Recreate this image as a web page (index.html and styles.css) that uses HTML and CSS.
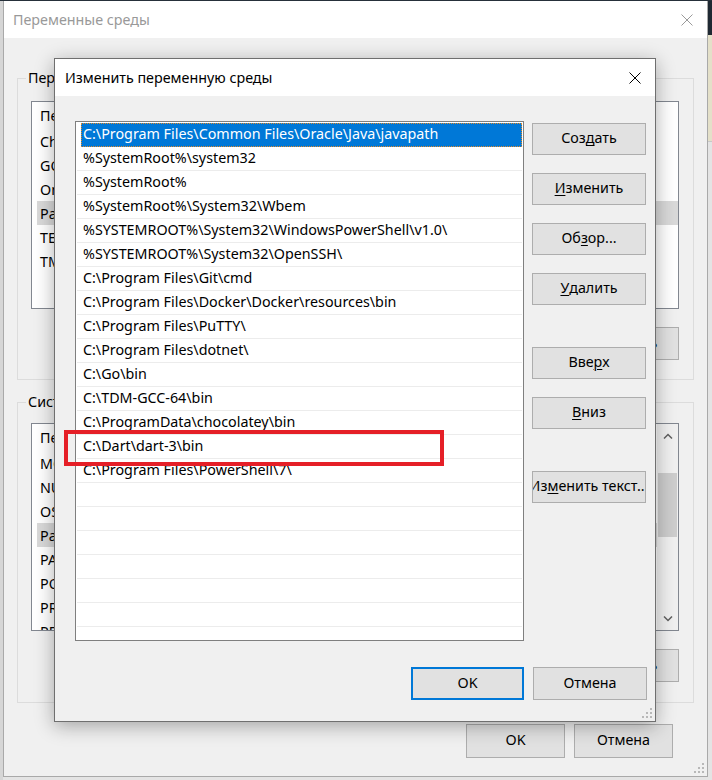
FILE: index.html
```html
<!DOCTYPE html>
<html>

<head>
    <title>Переменные среды</title>
    <meta charset="utf-8">
    <link rel="stylesheet" href="styles.css">
</head>

<body>

    <div class="desk">

        <div class="edge-left"></div>

        <!-- окно на заднем плане -->
        <div class="win main">
            <div class="titlebar">
                <span class="title">Переменные среды</span>
                <svg class="close" width="12" height="12" viewBox="0 0 12 12">
                    <path d="M0.5 0.5 L11.5 11.5 M11.5 0.5 L0.5 11.5" stroke="#9a9a9a" stroke-width="1" fill="none" />
                </svg>
            </div>
            <div class="win-body">
                <div class="group">
                    <span class="legend">Переменные среды пользователя</span>
                    <div class="lv">
                        <div class="lv-items">
                            <div class="lv-head">Переменная</div>
                            <div class="lv-row">ChocolateyLastPathUpdate</div>
                            <div class="lv-row">GOPATH</div>
                            <div class="lv-row">OneDrive</div>
                            <div class="lv-row sel">Path</div>
                            <div class="lv-row">TEMP</div>
                            <div class="lv-row">TMP</div>
                        </div>
                    </div>
                    <div class="btns">
                        <button>Создать...</button>
                        <button>Изменить...</button>
                        <button>Удалить</button>
                    </div>
                </div>

                <div class="group sys">
                    <span class="legend">Системные переменные</span>
                    <div class="lv">
                        <div class="lv-items">
                            <div class="lv-head">Переменная</div>
                            <div class="lv-row">MOZ_PLUGIN_PATH</div>
                            <div class="lv-row">NUMBER_OF_PROCESSORS</div>
                            <div class="lv-row">OS</div>
                            <div class="lv-row sel">Path</div>
                            <div class="lv-row">PATHEXT</div>
                            <div class="lv-row">POWERSHELL_DISTRIBUTION</div>
                            <div class="lv-row">PROCESSOR_ARCHITECTURE</div>
                            <div class="lv-row">PROCESSOR_IDENTIFIER</div>
                        </div>
                        <div class="sb">
                            <div class="sb-arrow">
                                <svg width="10" height="6" viewBox="0 0 10 6"><path d="M1 5.5 L5 1.5 L9 5.5" stroke="#606060" stroke-width="1.5" fill="none" /></svg>
                            </div>
                            <div class="sb-track"><div class="sb-thumb"></div></div>
                            <div class="sb-arrow">
                                <svg width="10" height="6" viewBox="0 0 10 6"><path d="M1 0.5 L5 4.5 L9 0.5" stroke="#606060" stroke-width="1.5" fill="none" /></svg>
                            </div>
                        </div>
                    </div>
                    <div class="btns">
                        <button>Создать...</button>
                        <button>Изменить...</button>
                        <button>Удалить</button>
                    </div>
                </div>

                <div class="btns bottom">
                    <button>OK</button>
                    <button>Отмена</button>
                </div>

                <svg class="grip" width="10" height="10" viewBox="0 0 10 10">
                    <rect x="8" y="0" width="2" height="2" /><rect x="4" y="4" width="2" height="2" /><rect x="8" y="4" width="2" height="2" />
                    <rect x="0" y="8" width="2" height="2" /><rect x="4" y="8" width="2" height="2" /><rect x="8" y="8" width="2" height="2" />
                </svg>
            </div>
        </div>

        <div class="edge-right">
            <div class="edge-dark"></div>
            <div class="edge-img"></div>
        </div>

        <!-- диалог поверх -->
        <div class="win dlg">
            <div class="titlebar">
                <span class="title">Изменить переменную среды</span>
                <svg class="close" width="12" height="12" viewBox="0 0 12 12">
                    <path d="M0.5 0.5 L11.5 11.5 M11.5 0.5 L0.5 11.5" stroke="#000" stroke-width="1" fill="none" />
                </svg>
            </div>
            <div class="dlg-body">
                <div class="dlg-main">
                    <div class="paths">
                        <div class="p-row sel">C:\Program Files\Common Files\Oracle\Java\javapath</div>
                        <div class="p-row">%SystemRoot%\system32</div>
                        <div class="p-row">%SystemRoot%</div>
                        <div class="p-row">%SystemRoot%\System32\Wbem</div>
                        <div class="p-row">%SYSTEMROOT%\System32\WindowsPowerShell\v1.0\</div>
                        <div class="p-row">%SYSTEMROOT%\System32\OpenSSH\</div>
                        <div class="p-row">C:\Program Files\Git\cmd</div>
                        <div class="p-row">C:\Program Files\Docker\Docker\resources\bin</div>
                        <div class="p-row">C:\Program Files\PuTTY\</div>
                        <div class="p-row">C:\Program Files\dotnet\</div>
                        <div class="p-row">C:\Go\bin</div>
                        <div class="p-row">C:\TDM-GCC-64\bin</div>
                        <div class="p-row">C:\ProgramData\chocolatey\bin</div>
                        <div class="p-row">C:\Dart\dart-3\bin</div>
                        <div class="p-row">C:\Program Files\PowerShell\7\</div>
                        <div class="p-row"></div>
                        <div class="p-row"></div>
                        <div class="p-row"></div>
                        <div class="p-row"></div>
                        <div class="p-row"></div>
                        <div class="p-row"></div>
                        <div class="p-row"></div>
                    </div>
                    <div class="side">
                        <button>Соз<u>д</u>ать</button>
                        <button><u>И</u>зменить</button>
                        <button>Об<u>з</u>ор...</button>
                        <button><u>У</u>далить</button>
                        <button class="gap">Вве<u>р</u>х</button>
                        <button><u>В</u>низ</button>
                        <button class="gap">Из<u>м</u>енить текст...</button>
                    </div>
                </div>
                <div class="btns dlg-bottom">
                    <button class="default">OK</button>
                    <button>Отмена</button>
                </div>
                <svg class="grip" width="10" height="10" viewBox="0 0 10 10">
                    <rect x="8" y="0" width="2" height="2" /><rect x="4" y="4" width="2" height="2" /><rect x="8" y="4" width="2" height="2" />
                    <rect x="0" y="8" width="2" height="2" /><rect x="4" y="8" width="2" height="2" /><rect x="8" y="8" width="2" height="2" />
                </svg>
            </div>
        </div>

        <!-- красная рамка -->
        <div class="mark"></div>

    </div>

</body>

</html>
```

FILE: styles.css
```css
* {
    box-sizing: border-box;
}

body {
    margin: 0;
    font-family: "Noto Sans", "Open Sans", sans-serif;
    font-size: 14.3px;
    color: #000;
}

.desk {
    position: relative;
    width: 712px;
    height: 780px;
    display: flex;
    align-items: flex-start;
    background: #e4e4e4;
    border-top: 1px solid #26303a;
    overflow: hidden;
}

.edge-left {
    width: 3px;
    height: 779px;
    background: #d6d6d6;
}

.edge-right {
    width: 4px;
    height: 779px;
    display: flex;
    flex-direction: column;
}

.edge-dark {
    height: 34px;
    background: #1f2933;
}

.edge-img {
    height: 107px;
    background: #e4e0c9;
    border-bottom: 1px solid #c8c8c8;
}

.win {
    background: #f0f0f0;
}

.main {
    width: 705px;
    height: 776px;
    border: 1px solid #a9a9a9;
    border-top: none;
    display: flex;
    flex-direction: column;
}

.titlebar {
    height: 37px;
    flex: none;
    background: #fff;
    display: flex;
    align-items: center;
    justify-content: space-between;
}

.main .titlebar {
    padding: 0 14px 0 9px;
}

.main .title {
    color: #999;
}

.win-body {
    position: relative;
    flex: 1;
    padding: 0 13px;
}

.group {
    position: relative;
    margin-top: 40px;
    border: 1px solid #dcdcdc;
    padding: 22px 14px 19px 13px;
}

.group.sys {
    margin-top: 22px;
    padding-top: 20px;
    padding-bottom: 20px;
}

.legend {
    position: absolute;
    top: -11px;
    left: 8px;
    padding: 0 2px;
    background: #f0f0f0;
    line-height: 20px;
    white-space: nowrap;
}

.lv {
    height: 208px;
    border: 1px solid #828790;
    background: #fff;
    display: flex;
    overflow: hidden;
}

.lv-items {
    flex: 1;
    overflow: hidden;
}

.lv-head {
    height: 27px;
    display: flex;
    align-items: center;
    padding-left: 8px;
    white-space: nowrap;
}

.lv-row {
    height: 24px;
    display: flex;
    align-items: center;
    margin-left: 5px;
    padding-left: 3px;
    white-space: nowrap;
}

.lv-row.sel {
    background: #d9d9d9;
}

.sb {
    width: 21px;
    flex: none;
    background: #f0f0f0;
    display: flex;
    flex-direction: column;
}

.sb-arrow {
    height: 23px;
    display: flex;
    align-items: center;
    justify-content: center;
}

.sb-track {
    flex: 1;
    padding: 26px 1px 0 1px;
}

.sb-thumb {
    height: 64px;
    background: #cdcdcd;
}

.btns {
    display: flex;
    justify-content: flex-end;
    gap: 9px;
    margin-top: 18px;
}

.btns button {
    width: 99px;
    height: 33px;
}

.btns.bottom {
    margin-top: 21px;
    margin-right: 21px;
}

.btns.bottom button {
    height: 34px;
}

button {
    display: flex;
    align-items: center;
    justify-content: center;
    padding: 0 0 3px 0;
    font: inherit;
    color: #000;
    background: #e1e1e1;
    border: 1px solid #adadad;
    border-radius: 0;
    white-space: nowrap;
    overflow: hidden;
}

u {
    text-decoration-thickness: 1px;
    text-underline-offset: 2px;
}

.grip {
    position: absolute;
    right: 3px;
    bottom: 3px;
    fill: #b8b8b8;
}

/* диалог */

.dlg {
    position: absolute;
    left: 54px;
    top: 57px;
    width: 602px;
    height: 664px;
    border: 1px solid #6f6f6f;
    box-shadow: 0 4px 18px rgba(0, 0, 0, 0.32);
    display: flex;
    flex-direction: column;
}

.dlg .titlebar {
    padding: 0 14px 0 10px;
}

.dlg-body {
    position: relative;
    flex: 1;
    padding: 25px 8px 0 20px;
}

.dlg-main {
    display: flex;
    gap: 8px;
}

.paths {
    width: 449px;
    height: 520px;
    border: 1px solid #7f7f7f;
    background: #fff;
    padding: 1px;
    overflow: hidden;
}

.p-row {
    height: 24px;
    border-bottom: 1px solid #ececec;
    padding-left: 6px;
    line-height: 22px;
    white-space: nowrap;
}

.p-row.sel {
    margin-left: 4px;
    padding-left: 2px;
    background: #0078d7;
    color: #fff;
    border-bottom: none;
    outline: 1px dotted #e08a2c;
    outline-offset: -1px;
}

.side {
    width: 114px;
    padding-top: 2px;
    display: flex;
    flex-direction: column;
}

.side button {
    height: 32px;
    margin-bottom: 18px;
}

.side button.gap {
    margin-top: 24px;
}

.dlg-bottom {
    margin-top: 26px;
}

.dlg-bottom button {
    width: 114px;
}

.dlg-bottom button.default {
    width: 113px;
    border: 2px solid #0078d7;
}

.mark {
    position: absolute;
    left: 64px;
    top: 429px;
    width: 380px;
    height: 36px;
    border: 4px solid #e51f27;
}
```
